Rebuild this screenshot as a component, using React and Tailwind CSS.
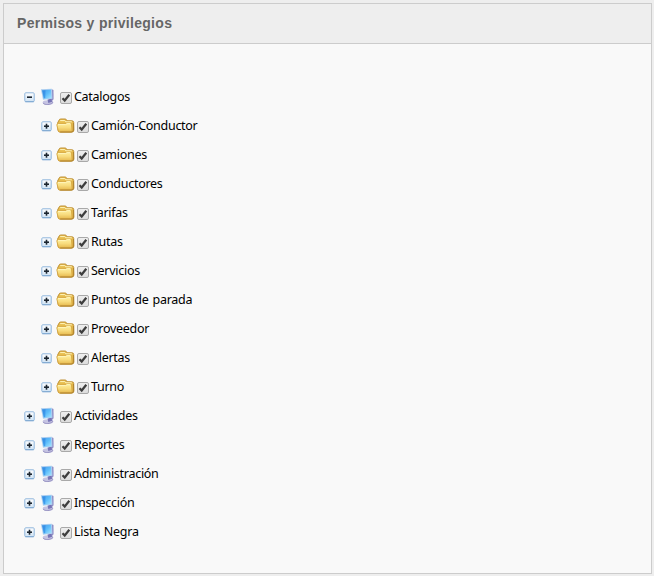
import React from 'react';

const children = [
  { label: 'Camión-Conductor' },
  { label: 'Camiones' },
  { label: 'Conductores' },
  { label: 'Tarifas' },
  { label: 'Rutas' },
  { label: 'Servicios' },
  { label: 'Puntos de parada' },
  { label: 'Proveedor' },
  { label: 'Alertas' },
  { label: 'Turno' },
];

const roots = [
  { label: 'Catalogos', children },
  { label: 'Actividades' },
  { label: 'Reportes' },
  { label: 'Administración' },
  { label: 'Inspección' },
  { label: 'Lista Negra' },
];

function Gradients() {
  return (
    <svg className="absolute size-0" aria-hidden="true">
      <defs>
        <linearGradient id="screen" x1="0" y1="0" x2="1" y2="1">
          <stop offset="0" stopColor="#4a9cea" />
          <stop offset="0.5" stopColor="#5cbcfa" />
          <stop offset="1" stopColor="#a5e6ff" />
        </linearGradient>
        <linearGradient id="folder" x1="0" y1="0" x2="0" y2="1">
          <stop offset="0" stopColor="#fff0a0" />
          <stop offset="0.5" stopColor="#f8dd80" />
          <stop offset="1" stopColor="#e6b84c" />
        </linearGradient>
        <linearGradient id="toggle" x1="0" y1="0" x2="0" y2="1">
          <stop offset="0" stopColor="#ffffff" />
          <stop offset="1" stopColor="#cfe2f3" />
        </linearGradient>
        <linearGradient id="check" x1="0" y1="0" x2="0" y2="1">
          <stop offset="0" stopColor="#efefef" />
          <stop offset="1" stopColor="#dcdcdc" />
        </linearGradient>
      </defs>
    </svg>
  );
}

function Toggle({ open }) {
  return (
    <svg className="mt-px h-[11px] w-[11px] shrink-0" viewBox="0 0 11 11">
      <rect x="0.8" y="0.8" width="9.4" height="8.9" rx="1" fill="url(#toggle)" stroke="#8fb6dc" />
      <path d="M1.3 9.7h8.4" stroke="#7fa9d2" />
      <path d="M3 5.2h5" stroke="#1c2630" strokeWidth="1.6" />
      {!open && <path d="M5.5 2.7v5" stroke="#1c2630" strokeWidth="1.6" />}
    </svg>
  );
}

function Monitor() {
  return (
    <svg className="mr-[5px] ml-[5px] h-[18px] w-[15px] shrink-0" viewBox="0 0 15 18">
      <ellipse cx="8" cy="14.6" rx="5.3" ry="2.3" fill="#c5c3e2" />
      <path d="M3.2 15.2c1.8 2 7 1.8 9.7-.8" stroke="#918cbd" strokeWidth="0.9" fill="none" />
      <path d="M7.5 11.5l4.3-1 .5 3.2-4 1.4z" fill="#7774b5" />
      <path d="M11.8 1.2l1.7.9.1 9.1-2 2z" fill="#918fc6" />
      <path d="M.9 1.2L11.9.8l.5 10-9.4 1z" fill="#a9cdf0" />
      <path d="M2 2.2l8.8-.4.5 8.1-7.6.8z" fill="url(#screen)" />
      <path d="M2.3 2.4l3.2-.1-.3 7.8-1.4.2z" fill="#1f77dc" opacity="0.5" />
    </svg>
  );
}

function Folder() {
  return (
    <svg className="mr-px ml-[4px] h-[16px] w-[20px] shrink-0" viewBox="0 0 20 16">
      <path
        d="M1.6 5L3 2.2Q3.4 1 4.8 1h4.4q1.2 0 1.7 1.8h5q1.7 0 1.8 1.5l.2 7.7q0 2-2 2H4q-1.8 0-2-2z"
        fill="#e8bd4e"
        stroke="#bf9136"
      />
      <path
        d="M.8 7Q.8 5.6 2.4 5.6h6.8q1 0 1.6-.9h3.4q1.2 0 1.3 1.4l.6 6.2q0 1.7-1.3 1.7H3.6q-1.2 0-1.4-1.5z"
        fill="url(#folder)"
        stroke="#d0a03a"
        strokeWidth="0.8"
      />
      <path d="M4.2 2.6h4.6l1 1.2h6M2 6.6h7.7l1.4-.9h3" stroke="#fff6bd" fill="none" />
      <path d="M17.4 5v7q0 1.7-1.5 2H4.2" stroke="#b08430" fill="none" />
    </svg>
  );
}

function CheckBox() {
  return (
    <svg className="mt-[2px] mr-[2px] h-[12px] w-[12px] shrink-0" viewBox="0 0 12 12">
      <rect x="0.5" y="0.5" width="11" height="11" rx="1.5" fill="url(#check)" stroke="#a9a9a9" />
      <path d="M2.5 6.3l2.2 2.2L9.3 2.8" stroke="#3d3d3d" strokeWidth="2.2" fill="none" />
    </svg>
  );
}

function Node({ node, nested }) {
  return (
    <li>
      <div className={nested ? 'flex h-[29px] items-center pl-[17px]' : 'flex h-[29px] items-center'}>
        <Toggle open={Boolean(node.children)} />
        {nested ? <Folder /> : <Monitor />}
        <CheckBox />
        <span className="mt-px whitespace-nowrap">{node.label}</span>
      </div>
      {node.children && (
        <ul>
          {node.children.map((child) => (
            <Node key={child.label} node={child} nested />
          ))}
        </ul>
      )}
    </li>
  );
}

export default function App() {
  return (
    <div className="h-[576px] w-[654px] bg-[#eeeeee] pt-[3px] pl-[3px]">
      <Gradients />
      <section className="flex h-[571px] w-[649px] flex-col border border-[#cccccc] bg-[#f9f9f9]">
        <header className="flex h-10 shrink-0 items-center border-b border-[#cccccc] bg-[#eeeeee] pl-[13px]">
          <h1 className="font-['Liberation_Sans',Arial,sans-serif] text-[14px] font-bold tracking-[0.3px] text-[#666666]">
            Permisos y privilegios
          </h1>
        </header>
        <ul className="pt-[38px] pl-5 font-['Noto_Sans',sans-serif] text-[12.5px] leading-[18px] tracking-[-0.28px] text-black [word-spacing:1px]">
          {roots.map((node) => (
            <Node key={node.label} node={node} />
          ))}
        </ul>
      </section>
    </div>
  );
}
